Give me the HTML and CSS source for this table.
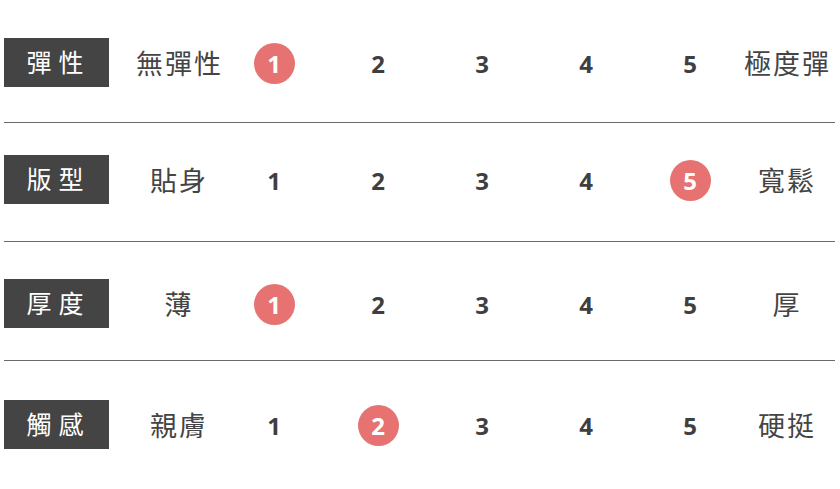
FILE: index.html
```html
<!DOCTYPE html>
<html lang="zh-Hant">
<head>
<meta charset="utf-8">
<link rel="stylesheet" href="styles.css">
</head>
<body>
<div class="chart">
  <div class="row r1">
    <div class="label">彈性</div>
    <div class="end">無彈性</div>
    <div class="num"><span class="dot">1</span></div>
    <div class="num"><span>2</span></div>
    <div class="num"><span>3</span></div>
    <div class="num"><span>4</span></div>
    <div class="num"><span>5</span></div>
    <div class="end">極度彈</div>
  </div>
  <div class="row r2">
    <div class="label">版型</div>
    <div class="end">貼身</div>
    <div class="num"><span>1</span></div>
    <div class="num"><span>2</span></div>
    <div class="num"><span>3</span></div>
    <div class="num"><span>4</span></div>
    <div class="num"><span class="dot">5</span></div>
    <div class="end">寬鬆</div>
  </div>
  <div class="row r3">
    <div class="label">厚度</div>
    <div class="end">薄</div>
    <div class="num"><span class="dot">1</span></div>
    <div class="num"><span>2</span></div>
    <div class="num"><span>3</span></div>
    <div class="num"><span>4</span></div>
    <div class="num"><span>5</span></div>
    <div class="end">厚</div>
  </div>
  <div class="row r4">
    <div class="label">觸感</div>
    <div class="end">親膚</div>
    <div class="num"><span>1</span></div>
    <div class="num"><span class="dot">2</span></div>
    <div class="num"><span>3</span></div>
    <div class="num"><span>4</span></div>
    <div class="num"><span>5</span></div>
    <div class="end">硬挺</div>
  </div>
</div>
</body>
</html>
```
FILE: styles.css
```css
html, body {
  margin: 0;
  padding: 0;
  background: #fff;
}
.chart {
  margin-left: 4px;
  width: 831px;
  font-family: "Noto Sans CJK TC", "Noto Sans", sans-serif;
}
.row {
  display: flex;
  align-items: center;
  height: 49px;
  border-bottom: 1px solid #6a6a6a;
}
.r1 { padding: 38px 0 35px; }
.r2 { padding: 32px 0 37px; }
.r3 { padding: 37px 0 32px; }
.r4 { padding: 39px 0 0; border-bottom: none; }
.label {
  flex: none;
  width: 105px;
  height: 49px;
  margin-right: 25px;
  background: #444;
  color: #fff;
  font-size: 25px;
  letter-spacing: 7px;
  padding-left: 4px;
  padding-bottom: 2px;
  box-sizing: border-box;
  display: flex;
  align-items: center;
  justify-content: center;
  line-height: 1;
  white-space: nowrap;
}
.end {
  flex: none;
  width: 88px;
  text-align: center;
  color: #444;
  font-size: 27px;
  letter-spacing: 2px;
  padding-left: 2px;
  box-sizing: border-box;
  line-height: 1;
  white-space: nowrap;
}
.num {
  flex: none;
  width: 104px;
  height: 49px;
  padding-top: 1px;
  box-sizing: border-box;
  display: flex;
  align-items: center;
  justify-content: center;
  font-family: "Open Sans", Lato, sans-serif;
  font-weight: 700;
  font-size: 24px;
  color: #3f3f3f;
}
.num span {
  display: flex;
  align-items: center;
  justify-content: center;
  width: 41px;
  height: 41px;
}
.num .dot {
  border-radius: 50%;
  background: #e67272;
  color: #fff;
}
```
